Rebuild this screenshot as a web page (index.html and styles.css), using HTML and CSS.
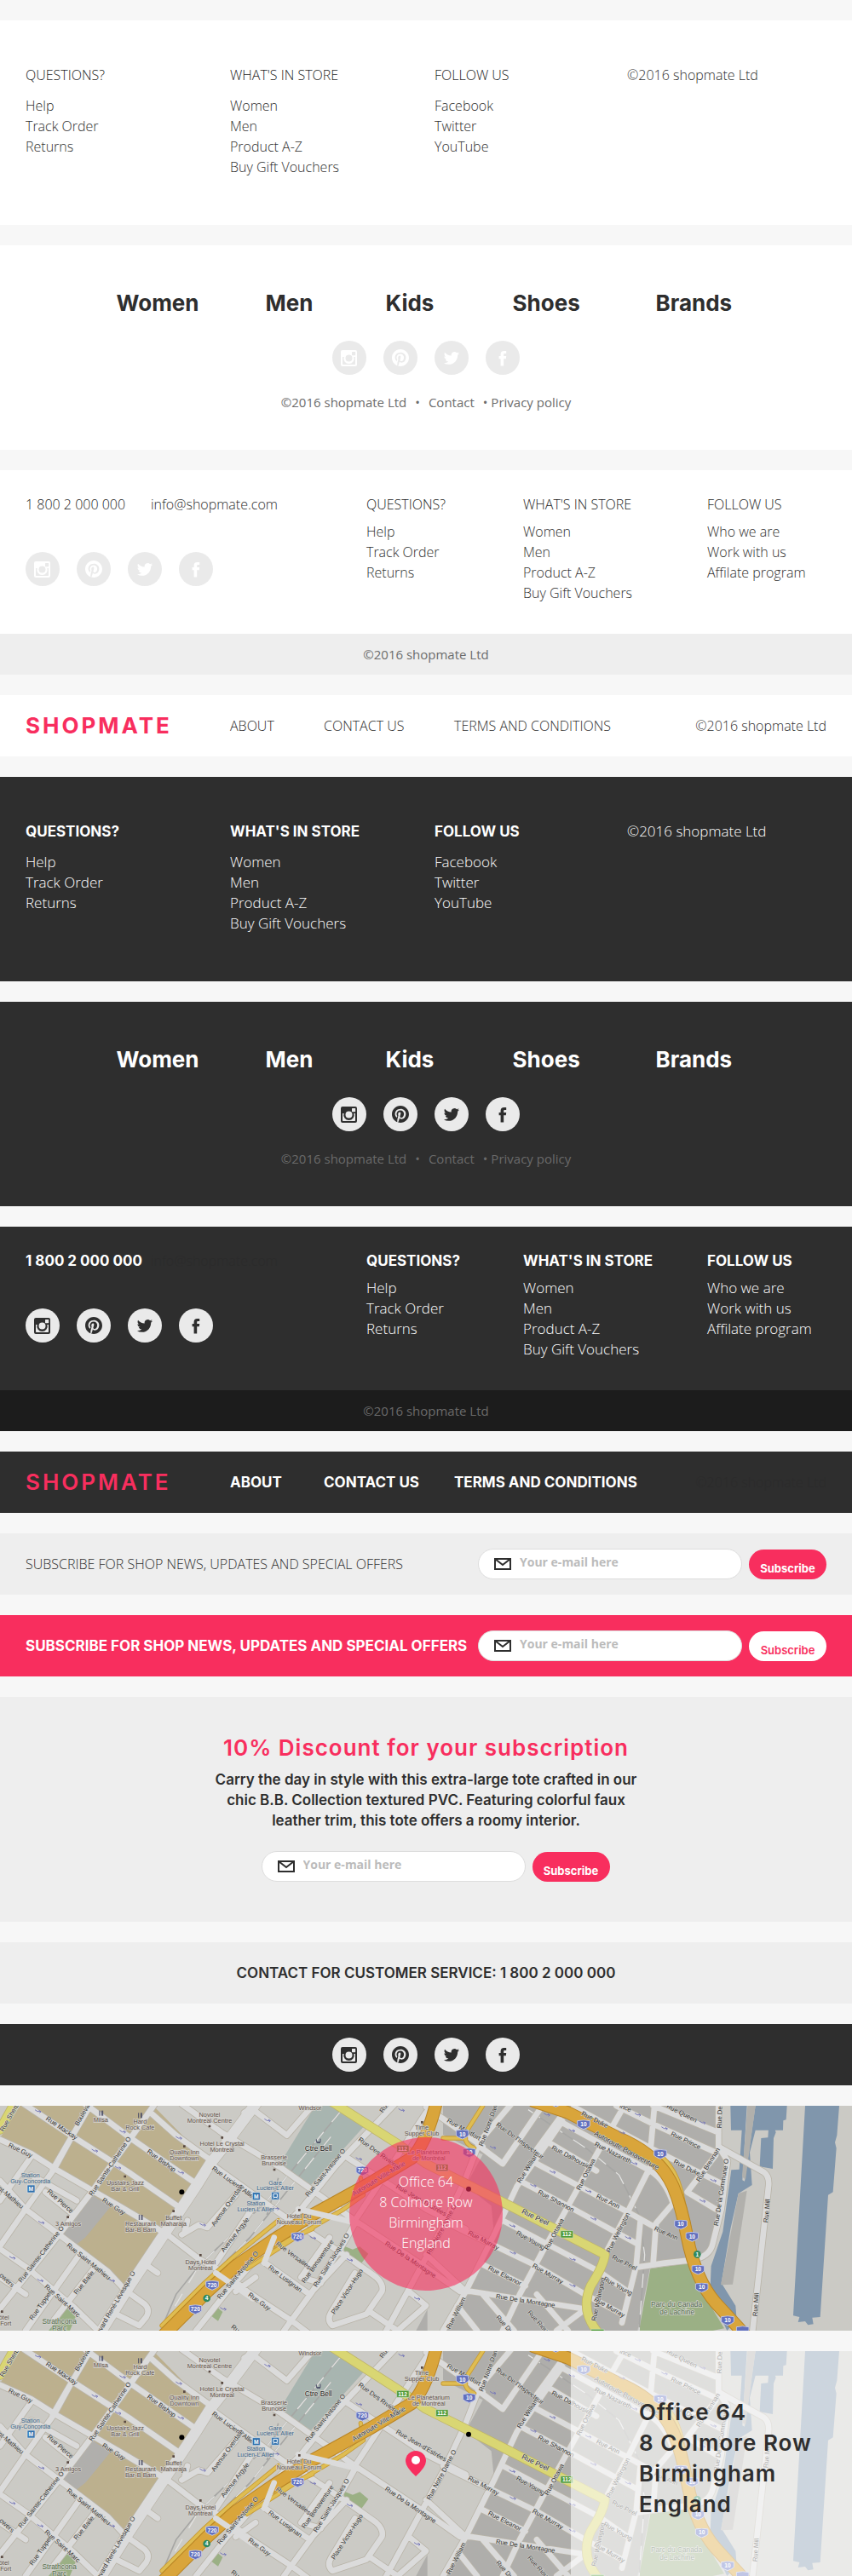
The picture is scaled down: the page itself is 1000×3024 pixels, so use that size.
FILE: index.html
```html
<!DOCTYPE html>
<html lang="en">
<head>
<meta charset="utf-8">
<meta name="viewport" content="width=device-width, initial-scale=1">
<title>Shopmate footers</title>
<link rel="stylesheet" href="styles.css">
</head>
<body>
<svg class="defs" aria-hidden="true">
  <symbol id="instagram" viewBox="0 0 40 40"><path fill-rule="evenodd" d="M12 11h15a2 2 0 0 1 2 2v15a2 2 0 0 1-2 2H12a2 2 0 0 1-2-2V13a2 2 0 0 1 2-2zM23.600 13a.6.6 0 0 0-.6.6v3a.6.6 0 0 0 .6.6h3a.6.6 0 0 0 .6-.6v-3a.6.6 0 0 0-.6-.6zM12 19v8.200a.8.8 0 0 0 .8.8h13.400a.8.8 0 0 0 .8-.8V19h-1.600a6.200 6.200 0 1 1-11.800 0zM19.500 16.500a4 4 0 1 0 0 8 4 4 0 0 0 0-8z"/></symbol>
  <symbol id="pinterest" viewBox="0 0 40 40"><path transform="translate(10 10) scale(.833)" d="M12 0C5.373 0 0 5.372 0 12c0 5.084 3.163 9.426 7.627 11.174-.105-.949-.2-2.405.042-3.441.218-.937 1.407-5.965 1.407-5.965s-.359-.719-.359-1.782c0-1.668.967-2.914 2.171-2.914 1.023 0 1.518.769 1.518 1.690 0 1.029-.655 2.568-.994 3.995-.283 1.194.599 2.169 1.777 2.169 2.133 0 3.772-2.249 3.772-5.495 0-2.873-2.064-4.882-5.012-4.882-3.414 0-5.418 2.561-5.418 5.207 0 1.031.397 2.138.893 2.738a.36.36 0 0 1 .083.345l-.333 1.360c-.053.22-.174.267-.402.161-1.499-.698-2.436-2.889-2.436-4.649 0-3.785 2.750-7.262 7.929-7.262 4.163 0 7.398 2.967 7.398 6.931 0 4.136-2.607 7.464-6.227 7.464-1.216 0-2.359-.631-2.750-1.378l-.748 2.853c-.271 1.043-1.002 2.350-1.492 3.146C9.570 23.812 10.763 24 12 24c6.627 0 12-5.373 12-12 0-6.628-5.373-12-12-12z"/></symbol>
  <symbol id="twitter" viewBox="0 0 40 40"><path transform="translate(10.800 11.300) scale(.76)" d="M23.954 4.569a10 10 0 0 1-2.825.775 4.958 4.958 0 0 0 2.163-2.723 9.990 9.990 0 0 1-3.127 1.184 4.920 4.920 0 0 0-8.384 4.482C7.691 8.094 4.066 6.130 1.640 3.161a4.822 4.822 0 0 0-.666 2.475c0 1.710.870 3.213 2.188 4.096a4.904 4.904 0 0 1-2.228-.616v.061a4.923 4.923 0 0 0 3.946 4.827 4.996 4.996 0 0 1-2.212.085 4.937 4.937 0 0 0 4.604 3.417 9.868 9.868 0 0 1-6.102 2.105c-.39 0-.779-.023-1.170-.067a13.995 13.995 0 0 0 7.557 2.209c9.054 0 13.999-7.496 13.999-13.986 0-.209 0-.42-.015-.63a9.936 9.936 0 0 0 2.460-2.548z"/></symbol>
  <symbol id="facebook" viewBox="0 0 40 40"><path d="M17.600 29.400v-8.200h-2v-3.100h2v-2.200c0-2.600 1.400-4 3.900-4h2.700v3.100h-1.700c-1 0-1.300.5-1.300 1.400v1.700h3l-.4 3.100h-2.600v8.200z"/></symbol>
  <symbol id="mail" viewBox="0 0 20 14"><path d="M1 1h18v12H1zM1 1l9 7 9-7" fill="none" stroke="#2e2e2e" stroke-width="2"/></symbol>

  <symbol id="shield" viewBox="0 0 48 36"><path d="M2 4q22-6 44 0v18q-6 6-22 12Q8 28 2 22z" fill="#6270bd" stroke="#c3c8e6" stroke-width="3"/></symbol>
  <symbol id="arrow" viewBox="0 0 28 20"><path d="M3 4l9 6h12M17 6l7 5-5 4" fill="none" stroke="#7a7bb8" stroke-width="3"/></symbol>

  <symbol id="map" viewBox="0 36 3000 792" preserveAspectRatio="xMidYMid slice">
    <rect y="30" width="3000" height="804" fill="#cbcac5"/>
    <path fill="#bcb08e" d="M70 36H540L740 240 570 480 440 672 215 500 330 330 180 255 0 150z"/>
    <path fill="#b0afac" d="M325 350 388 392Q350 440 300 500L265 527 215 492zM320 36 262 140 300 60z"/>
    <path fill="#a8b5b0" d="M1110 36h80l92 72-190 210-110-72z"/>
    <path fill="#afaeab" d="M1560 36H2530l3 150 30 50-25 170-38 155-210 40-45 227H1560l80-140 100-200-10-100-90-70 60-110-140-70zM1465 828l40-75v75z"/>
    <path fill="#9bb085" d="M2290 610l140-20 60 130 60 100-40 8h-260zM1212 530l30 12 25-10 30 25-25 35-60-32zM758 740l26 22-16 32-32-24zM238 748l28 32-20 48h-75z"/>
    <path fill="#8096ac" d="M2572 36H2630L2614 298 2622 302 2660 36H2771L2768 85 2758 88 2757 122H2660L2640 200 2648 315 2600 345 2572 470 2540 660 2590 740 2594 790 2560 828 2500 700 2504 600 2545 480 2575 262 2603 260 2612 122H2574zM2680 150 2704 148 2706 118H2728L2732 130 2724 150 2721 258 2675 250zM2835 36H2955L2947 140 2940 165 2945 185 2933 340 2916 350 2888 780 2860 782 2864 805 2845 808 2835 795 2810 798 2815 780 2793 775z"/>
    <path fill="#b1b0ac" d="M2632 36h28l-35 260-12-10zM2600 345l30-10-50 330-42 2z"/>
    <g fill="none" stroke="#a6a6a4" stroke-width="5">
      <path d="M1200 55 940 370 700 600 620 700 565 828M1165 145 1040 300 880 500 640 740M980 290 940 420M1860 50 2070 190 2180 280 2250 420 2270 560 2250 828"/>
      <path d="M1200 55 940 370 700 600 565 828M1165 145 880 500 640 740M1860 50 2070 190 2180 280 2250 420 2270 560 2250 828" stroke="#e2e2e0" stroke-width="4" stroke-dasharray="50 45"/>
    </g>
    <defs>
      <path id="streets" d="M85 30 250 140 460 275 640 400M0 155 110 205 200 262 430 395 590 490 700 575 800 630 870 690 1030 795 1090 840M300 30 460 150 690 310M530 60 620 140 745 230M640 30 780 130 990 255 1250 440 1500 605 1620 690 1660 690 2050 750M735 235 1000 425 1090 480 1240 580 1325 640Q1352 665 1345 690L1290 770 1170 810Q1150 790 1165 765L1250 625M885 45 1010 140 1100 36M0 300 90 400 215 495 380 620 440 685 510 735Q530 755 515 780L490 810 410 770M0 540 100 610 260 745 345 828M545 30 460 150 330 330 200 500 80 650 0 750M320 30 250 150 190 260 90 400 0 530M110 215 0 370M250 150 185 262M1390 30 1180 250 1060 400 940 520 880 600 800 690 690 828M1250 450 1210 520 1100 690 1000 828M1500 60 1250 440M1800 30 1690 160 1640 290 1560 460 1430 700 1360 828M1980 90 1820 320 1740 490 1640 690 1560 828M2110 190 2000 390 1910 550 1830 700 1770 828M2290 250 2210 410 2130 560M1900 50 1770 240 1690 180M2020 40 2300 190 2540 310M2170 36 2310 105 2520 200M2300 36 2530 130M1970 90 2280 260Q2340 290 2370 380L2310 450 2300 590M1940 170 2100 265M1890 240 2210 410 2300 460M1830 300 2020 400 2240 520M1770 440 2110 620 2210 690M1560 440 1620 470 1890 600 2060 700 2190 770M1690 590 1850 670M2530 180 2690 270Q2710 285 2706 320L2650 828M2530 36V180L2562 230 2540 400 2510 520Q2500 570 2430 580L2340 590 2240 605M2520 210 2420 340 2520 400M2305 30 2290 200M2190 50 2150 120M2255 440 2240 600 2190 800M1970 80 1890 190M1890 700 2000 828M1700 700 1810 828M1610 740 1680 828M2050 760 1960 828M920 580 1090 700 1220 560M1130 660 1060 640 1160 500M900 640 830 690M1300 760 1400 828M1640 690 1500 560M280 560 90 828M330 610 190 790M520 600 555 625M640 490 700 455 730 465 830 350M650 480 660 440M1210 210 1380 320 1500 400 1640 470M1500 40 1700 180M0 640 90 700M900 36 860 60M880 410 760 590M160 340 260 420 200 500M110 280 270 370M1440 690 1500 740 1400 828"/>
      <path id="avenue" d="M900 30 780 190 740 240 690 320 570 500 450 680 350 840"/>
      <path id="yellow" d="M1150 10 1400 170 1500 240 1760 370 2130 560Q2125 600 2080 670 2040 760 2110 840M50 30 0 120"/>
      <path id="autoroute" d="M570 850 730 690 830 600 960 510 1100 420 1300 310 1450 220Q1500 170 1535 30M1880 20 2000 60 2180 150Q2320 210 2370 320 2400 390 2420 500 2450 650 2520 730L2630 850"/>
      <path id="ramps" d="M570 810 720 660 820 570 980 440M870 610 1040 500 1210 400 1280 350 1270 290M920 550 1100 470M1640 150 1560 150M1700 36 1640 130Q1630 170 1670 185M2330 215Q2390 270 2405 370L2440 520"/>
    </defs>
    <g fill="none" stroke-linejoin="round" stroke-linecap="round">
      <use href="#streets" stroke="#b9b4a8" stroke-width="25"/>
      <use href="#avenue" stroke="#b9b4a8" stroke-width="42"/>
      <use href="#streets" stroke="#dbdbdb" stroke-width="20"/>
      <use href="#avenue" stroke="#dbdbdb" stroke-width="38"/>
      <use href="#yellow" stroke="#bfb56a" stroke-width="34"/>
      <use href="#yellow" stroke="#d9d673" stroke-width="29"/>
      <use href="#ramps" stroke="#c79a35" stroke-width="16"/>
      <use href="#ramps" stroke="#dfbd52" stroke-width="11"/>
      <use href="#autoroute" stroke="#b98525" stroke-width="46"/>
      <use href="#autoroute" stroke="#d9a53b" stroke-width="40"/>
      <path d="M760 625 890 715M930 590 965 500M1050 400 1260 450" stroke="#dbdbdb" stroke-width="20"/>
    </g>
    <g>
      <use href="#arrow" x="120" y="46" width="28" height="20"/><use href="#arrow" x="320" y="185" width="28" height="20"/><use href="#arrow" x="418" y="118" width="28" height="20"/><use href="#arrow" x="402" y="245" width="28" height="20"/><use href="#arrow" x="616" y="140" width="28" height="20"/><use href="#arrow" x="623" y="262" width="28" height="20"/><use href="#arrow" x="928" y="78" width="28" height="20"/><use href="#arrow" x="132" y="438" width="28" height="20"/><use href="#arrow" x="30" y="562" width="28" height="20"/><use href="#arrow" x="128" y="642" width="28" height="20"/><use href="#arrow" x="380" y="642" width="28" height="20"/><use href="#arrow" x="700" y="446" width="28" height="20"/><use href="#arrow" x="958" y="388" width="28" height="20"/><use href="#arrow" x="1088" y="492" width="28" height="20"/><use href="#arrow" x="1218" y="570" width="28" height="20"/><use href="#arrow" x="1250" y="214" width="28" height="20"/><use href="#arrow" x="1400" y="42" width="28" height="20"/><use href="#arrow" x="1455" y="706" width="28" height="20"/><use href="#arrow" x="772" y="742" width="28" height="20"/><use href="#arrow" x="1722" y="174" width="28" height="20"/><use href="#arrow" x="1912" y="58" width="28" height="20"/><use href="#arrow" x="2000" y="114" width="28" height="20"/><use href="#arrow" x="2176" y="122" width="28" height="20"/><use href="#arrow" x="2232" y="58" width="28" height="20"/><use href="#arrow" x="2326" y="106" width="28" height="20"/><use href="#arrow" x="2460" y="86" width="28" height="20"/><use href="#arrow" x="2220" y="230" width="28" height="20"/><use href="#arrow" x="1932" y="260" width="28" height="20"/><use href="#arrow" x="1864" y="308" width="28" height="20"/><use href="#arrow" x="2058" y="328" width="28" height="20"/><use href="#arrow" x="2076" y="425" width="28" height="20"/><use href="#arrow" x="2198" y="492" width="28" height="20"/><use href="#arrow" x="1790" y="450" width="28" height="20"/><use href="#arrow" x="1792" y="545" width="28" height="20"/><use href="#arrow" x="2002" y="568" width="28" height="20"/><use href="#arrow" x="2002" y="660" width="28" height="20"/><use href="#arrow" x="2460" y="362" width="28" height="20"/><use href="#arrow" x="2498" y="290" width="28" height="20"/>
    </g>
    <g class="map-street">
      <text transform="translate(160 85) rotate(34)">Rue Mackay</text>
      <text transform="translate(275 108) rotate(-60)">Boulevard</text>
      <text transform="translate(12 128) rotate(-60)">Rue Sherb</text>
      <text transform="translate(28 180) rotate(26)">Rue Guy</text>
      <text transform="translate(516 200) rotate(36)">Rue Bishop</text>
      <text transform="translate(325 355) rotate(-56)">Rue Sainte-Catherine O</text>
      <text transform="translate(165 340) rotate(42)">Rue Pierce</text>
      <text transform="translate(358 372) rotate(33)">Rue Guy</text>
      <text transform="translate(-8 330) rotate(40)">nt-Mathieu</text>
      <text transform="translate(233 530) rotate(39)">Rue Saint-Mathieu</text>
      <text transform="translate(75 660) rotate(-52)">Rue Sainte-Catherine O</text>
      <text transform="translate(155 675) rotate(42)">Rue Saint-Marc</text>
      <text transform="translate(270 702) rotate(-51)">Rue Baile</text>
      <text transform="translate(115 792) rotate(-55)">Rue Tupper</text>
      <text transform="translate(-4 635) rotate(42)">owers</text>
      <text transform="translate(352 840) rotate(-60)">evard René-Lévesque O</text>
      <text transform="translate(745 260) rotate(36)">Rue Lucien l'Allier</text>
      <text transform="translate(755 462) rotate(-54)">Avenue Overdale</text>
      <text transform="translate(788 553) rotate(-52)">Avenue Argyle</text>
      <text transform="translate(1085 358) rotate(-51)">Rue Saint-Antoine O</text>
      <text transform="translate(1260 158) rotate(36)">Rue Des Rivières</text>
      <text transform="translate(1246 354) rotate(-31)">Autoroute Ville-Marie</text>
      <text transform="translate(1393 325) rotate(30)">Rue Jean-d'Estrées</text>
      <text transform="translate(970 525) rotate(37)">Rue Versailles</text>
      <text transform="translate(943 608) rotate(37)">Rue Lusignan</text>
      <text transform="translate(1073 662) rotate(-55)">Rue Bonaventure</text>
      <text transform="translate(1115 676) rotate(-58)">Rue Saint-Jacques O</text>
      <text transform="translate(775 718) rotate(-50)">Rue Saint-Antoine O</text>
      <text transform="translate(872 705) rotate(36)">Rue Guy</text>
      <text transform="translate(1178 772) rotate(-57)">Place Victor-Hugo</text>
      <text transform="translate(1354 525) rotate(34)">Rue De la Montagne</text>
      <text transform="translate(812 818) rotate(36)">Rue Guy</text>
      <text transform="translate(1348 62) rotate(-55)">Rue</text>
      <text transform="translate(1572 92) rotate(30)">Rue Montfort</text>
      <text transform="translate(1700 180) rotate(-70)">Rue Notre Dame</text>
      <text transform="translate(1745 106) rotate(36)">Rue De l'Inspecteur</text>
      <text transform="translate(1940 188) rotate(28)">Rue Dalhousie</text>
      <text transform="translate(1832 310) rotate(-58)">Rue William</text>
      <text transform="translate(2042 335) rotate(-63)">Rue Ottawa</text>
      <text transform="translate(1892 345) rotate(28)">Rue Shannon</text>
      <text transform="translate(2098 360) rotate(26)">Rue Ann</text>
      <text class="large" transform="translate(1835 413) rotate(26)">Rue Peel</text>
      <text transform="translate(1816 488) rotate(30)">Rue Young</text>
      <text transform="translate(1930 545) rotate(-62)">Rue Ottawa</text>
      <text transform="translate(2148 555) rotate(-63)">Rue Wellington</text>
      <text transform="translate(1646 488) rotate(28)">Rue Murray</text>
      <text transform="translate(1515 562) rotate(-62)">Rue Notre Dame O</text>
      <text transform="translate(1717 612) rotate(27)">Rue Eleanor</text>
      <text transform="translate(1873 604) rotate(30)">Rue Murray</text>
      <text transform="translate(1745 714) rotate(9)">Rue De la Montagne</text>
      <text transform="translate(1585 824) rotate(-63)">Rue William</text>
      <text transform="translate(1745 782) rotate(48)">Rue Du</text>
      <text transform="translate(1856 765) rotate(48)">Rue Rioux</text>
      <text transform="translate(2098 795) rotate(-78)">Rue Wellington</text>
      <text transform="translate(2090 722) rotate(30)">Rue Murray</text>
      <text transform="translate(2123 650) rotate(29)">Rue Young</text>
      <text transform="translate(2153 574) rotate(27)">Rue Peel</text>
      <text class="large" transform="translate(2090 138) rotate(29)">Autoroute Bonaventure</text>
      <text transform="translate(2045 68) rotate(27)">Rue Duke</text>
      <text transform="translate(2092 176) rotate(27)">Rue Nazareth</text>
      <text transform="translate(2180 42) rotate(22)">ince</text>
      <text transform="translate(2345 42) rotate(27)">Rue Queen</text>
      <text transform="translate(2360 140) rotate(26)">Rue Prince</text>
      <text transform="translate(2370 238) rotate(27)">Rue Duke</text>
      <text transform="translate(2464 305) rotate(-58)">Rue Brennan</text>
      <text transform="translate(2528 460) rotate(-81)">Rue De la Commune O</text>
      <text transform="translate(2540 115) rotate(-88)">Rue De La</text>
      <text transform="translate(2302 474) rotate(24)">Rue Ann</text>
      <text transform="translate(2704 448) rotate(-85)">Rue Mill</text>
      <text transform="translate(2666 778) rotate(-86)">Rue Mill</text>
    </g>
    <g class="map-place">
      <text x="355" y="92">Milsa</text><text x="493" y="99">Hard</text><text x="493" y="120">Rock Café</text>
      <text x="738" y="75">Novotel</text><text x="738" y="96">Montreal Centre</text>
      <text x="782" y="177">Hotel Le Crystal</text><text x="782" y="198">Montreal</text>
      <text x="649" y="207">Quality Inn</text><text x="649" y="228">Downtown</text>
      <text x="441" y="315">Upstairs Jazz</text><text x="441" y="336">Bar &amp; Grill</text>
      <text x="495" y="458">Restaurant</text><text x="495" y="479">Bar-B Barn</text>
      <text x="611" y="437">Buffet</text><text x="611" y="458">Maharaja</text>
      <text x="240" y="458">3 Amigos</text>
      <text x="706" y="593">Days Hotel</text><text x="706" y="614">Montreal</text>
      <text x="965" y="226">Brasserie</text><text x="965" y="247">Brunoise</text>
      <text x="1053" y="431">Hotel Du</text><text x="1053" y="452">Nouveau Forum</text>
      <text x="1092" y="51">Windsor</text>
      <text x="1485" y="121">Time</text><text x="1485" y="142">Supper Club</text>
      <text x="1510" y="206">Le Planétarium</text><text x="1510" y="227">de Montréal</text>
      <text x="14" y="789">ôtel</text><text x="20" y="810">Fort</text>
    </g>
    <g class="map-place station">
      <text x="107" y="289">Station</text><text x="107" y="309">Guy-Concordia</text>
      <text x="969" y="315">Gare</text><text x="969" y="334">Lucien-L'Allier</text>
      <text x="901" y="387">Station</text><text x="901" y="407">Lucien-L'Allier</text>
    </g>
    <g class="map-place area">
      <text x="1121" y="194" fill="#222">Ctre Bell</text>
      <text x="209" y="803">Strathcona</text><text x="209" y="828">Parc</text>
      <text x="2382" y="745">Parc du Canada</text><text x="2384" y="771">de Lachine</text>
    </g>
    <g fill="#5a4a42"><path d="M734 104h8v8h-8zM778 144h8v8h-8zM645 175h8v8h-8zM436 281h8v8h-8zM607 403h8v8h-8zM235 424h8v8h-8zM702 558h8v8h-8zM962 257h8v8h-8zM1050 399h8v8h-8zM1482 90h8v8h-8zM3 757h8v8H3z"/></g>
    <path d="M351 53v18M359 53v18M362 53v18M488 61v18M496 61v18M499 61v18M490 420v18M498 420v18M501 420v18M1114 154v10h14v-12M1116 166h12" stroke="#4a4c66" stroke-width="3" fill="none"/>
    <circle cx="640" cy="340" r="9"/><circle cx="1650" cy="329" r="9"/>
    <g class="map-badge">
      <path fill="#2f70ad" stroke="#e1e8ef" stroke-width="2" d="M96 315h27v27H96zM889 341h27v27h-27zM956 340h27v27h-27z"/>
      <text x="109" y="337">M</text><text x="902" y="363">M</text>
      <path d="M963 346h13v12h-13zM963 362l2-4M976 362l-2-4" fill="none" stroke="#fff" stroke-width="3"/>
      <circle cx="728" cy="714" r="13" fill="#2f8a5e"/><text x="728" y="721">4</text>
      <circle cx="2455" cy="559" r="13" fill="#2f8a5e"/><text x="2455" y="566">1</text>
      <path fill="#4e9a36" stroke="#cfdcc8" stroke-width="2" d="M1397 175h43v24h-43zM1535 242h43v24h-43zM1974 476h44v25h-44zM2081 823h46v10h-46z"/>
      <text x="1418" y="194">112</text><text x="1556" y="261">112</text><text x="1996" y="495">112</text>
      <use href="#shield" x="1252" y="248" width="48" height="36"/><text x="1276" y="271">720</text>
      <use href="#shield" x="1024" y="481" width="48" height="36"/><text x="1048" y="504">720</text>
      <use href="#shield" x="723" y="651" width="48" height="36"/><text x="747" y="674">720</text>
      <use href="#shield" x="664" y="736" width="48" height="36"/><text x="688" y="759">720</text>
      <use href="#shield" x="1604" y="119" width="48" height="36"/><text x="1628" y="143">10</text>
      <use href="#shield" x="1628" y="184" width="48" height="36"/><text x="1652" y="208">10</text>
      <use href="#shield" x="2031" y="85" width="48" height="36"/><text x="2055" y="109">10</text>
      <use href="#shield" x="2301" y="189" width="48" height="36"/><text x="2325" y="213">10</text>
      <use href="#shield" x="2373" y="437" width="48" height="36"/><text x="2397" y="460">10</text>
      <use href="#shield" x="2413" y="480" width="48" height="36"/><text x="2437" y="503">10</text>
      <use href="#shield" x="2434" y="596" width="48" height="36"/><text x="2458" y="619">10</text>
      <use href="#shield" x="2447" y="659" width="48" height="36"/><text x="2471" y="682">10</text>
      <use href="#shield" x="2538" y="775" width="48" height="36"/><text x="2562" y="799">10</text>
      <use href="#shield" x="2591" y="811" width="48" height="36"/>
      <use href="#shield" x="1933" y="6" width="48" height="36"/>
    </g>
  </symbol>
</svg>

<main class="stack">
  <footer class="panel columns light">
    <div><h3>QUESTIONS?</h3><ul><li><a href="#">Help</a></li><li><a href="#">Track Order</a></li><li><a href="#">Returns</a></li></ul></div>
    <div><h3>WHAT'S IN STORE</h3><ul><li><a href="#">Women</a></li><li><a href="#">Men</a></li><li><a href="#">Product A-Z</a></li><li><a href="#">Buy Gift Vouchers</a></li></ul></div>
    <div><h3>FOLLOW US</h3><ul><li><a href="#">Facebook</a></li><li><a href="#">Twitter</a></li><li><a href="#">YouTube</a></li></ul></div>
    <p>©2016 shopmate Ltd</p>
  </footer>

  <footer class="panel centered light">
    <nav class="departments"><a href="#">Women</a><a href="#">Men</a><a href="#">Kids</a><a href="#">Shoes</a><a href="#">Brands</a></nav>
    <div class="social">
      <a href="#" aria-label="Instagram"><svg><use href="#instagram"/></svg></a><a href="#" aria-label="Pinterest"><svg><use href="#pinterest"/></svg></a><a href="#" aria-label="Twitter"><svg><use href="#twitter"/></svg></a><a href="#" aria-label="Facebook"><svg><use href="#facebook"/></svg></a>
    </div>
    <p class="legal"><span>©2016 shopmate Ltd</span><span>•</span><a href="#">Contact</a><span>• <a href="#">Privacy policy</a></span></p>
  </footer>

  <footer class="panel light">
    <div class="directory">
      <div>
        <div class="contact"><h3>1 800 2 000 000</h3><a href="#">info@shopmate.com</a></div>
        <div class="social">
          <a href="#" aria-label="Instagram"><svg><use href="#instagram"/></svg></a><a href="#" aria-label="Pinterest"><svg><use href="#pinterest"/></svg></a><a href="#" aria-label="Twitter"><svg><use href="#twitter"/></svg></a><a href="#" aria-label="Facebook"><svg><use href="#facebook"/></svg></a>
        </div>
      </div>
      <div><h3>QUESTIONS?</h3><ul><li><a href="#">Help</a></li><li><a href="#">Track Order</a></li><li><a href="#">Returns</a></li></ul></div>
      <div><h3>WHAT'S IN STORE</h3><ul><li><a href="#">Women</a></li><li><a href="#">Men</a></li><li><a href="#">Product A-Z</a></li><li><a href="#">Buy Gift Vouchers</a></li></ul></div>
      <div><h3>FOLLOW US</h3><ul><li><a href="#">Who we are</a></li><li><a href="#">Work with us</a></li><li><a href="#">Affilate program</a></li></ul></div>
    </div>
    <p class="legal base">©2016 shopmate Ltd</p>
  </footer>

  <footer class="panel strip light">
    <a class="logo" href="#">SHOPMATE</a><a href="#">ABOUT</a><a href="#">CONTACT US</a><a href="#">TERMS AND CONDITIONS</a><p>©2016 shopmate Ltd</p>
  </footer>

  <footer class="panel columns dark">
    <div><h3>QUESTIONS?</h3><ul><li><a href="#">Help</a></li><li><a href="#">Track Order</a></li><li><a href="#">Returns</a></li></ul></div>
    <div><h3>WHAT'S IN STORE</h3><ul><li><a href="#">Women</a></li><li><a href="#">Men</a></li><li><a href="#">Product A-Z</a></li><li><a href="#">Buy Gift Vouchers</a></li></ul></div>
    <div><h3>FOLLOW US</h3><ul><li><a href="#">Facebook</a></li><li><a href="#">Twitter</a></li><li><a href="#">YouTube</a></li></ul></div>
    <p>©2016 shopmate Ltd</p>
  </footer>

  <footer class="panel centered dark">
    <nav class="departments"><a href="#">Women</a><a href="#">Men</a><a href="#">Kids</a><a href="#">Shoes</a><a href="#">Brands</a></nav>
    <div class="social">
      <a href="#" aria-label="Instagram"><svg><use href="#instagram"/></svg></a><a href="#" aria-label="Pinterest"><svg><use href="#pinterest"/></svg></a><a href="#" aria-label="Twitter"><svg><use href="#twitter"/></svg></a><a href="#" aria-label="Facebook"><svg><use href="#facebook"/></svg></a>
    </div>
    <p class="legal"><span>©2016 shopmate Ltd</span><span>•</span><a href="#">Contact</a><span>• <a href="#">Privacy policy</a></span></p>
  </footer>

  <footer class="panel dark">
    <div class="directory">
      <div>
        <div class="contact"><h3>1 800 2 000 000</h3><a class="muted" href="#">info@shopmate.com</a></div>
        <div class="social">
          <a href="#" aria-label="Instagram"><svg><use href="#instagram"/></svg></a><a href="#" aria-label="Pinterest"><svg><use href="#pinterest"/></svg></a><a href="#" aria-label="Twitter"><svg><use href="#twitter"/></svg></a><a href="#" aria-label="Facebook"><svg><use href="#facebook"/></svg></a>
        </div>
      </div>
      <div><h3>QUESTIONS?</h3><ul><li><a href="#">Help</a></li><li><a href="#">Track Order</a></li><li><a href="#">Returns</a></li></ul></div>
      <div><h3>WHAT'S IN STORE</h3><ul><li><a href="#">Women</a></li><li><a href="#">Men</a></li><li><a href="#">Product A-Z</a></li><li><a href="#">Buy Gift Vouchers</a></li></ul></div>
      <div><h3>FOLLOW US</h3><ul><li><a href="#">Who we are</a></li><li><a href="#">Work with us</a></li><li><a href="#">Affilate program</a></li></ul></div>
    </div>
    <p class="legal base">©2016 shopmate Ltd</p>
  </footer>

  <footer class="panel strip dark">
    <a class="logo" href="#">SHOPMATE</a><a href="#">ABOUT</a><a href="#">CONTACT US</a><a href="#">TERMS AND CONDITIONS</a><p class="muted">©2016 shopmate Ltd</p>
  </footer>

  <section class="panel newsletter grey">
    <label for="email-a">SUBSCRIBE FOR SHOP NEWS, UPDATES AND SPECIAL OFFERS</label>
    <form class="signup"><span class="field"><svg><use href="#mail"/></svg><input id="email-a" type="email" placeholder="Your e-mail here"></span><button type="button">Subscribe</button></form>
  </section>

  <section class="panel newsletter pink">
    <label for="email-b">SUBSCRIBE FOR SHOP NEWS, UPDATES AND SPECIAL OFFERS</label>
    <form class="signup"><span class="field"><svg><use href="#mail"/></svg><input id="email-b" type="email" placeholder="Your e-mail here"></span><button type="button">Subscribe</button></form>
  </section>

  <section class="panel offer grey">
    <h2>10% Discount for your subscription</h2>
    <p>Carry the day in style with this extra-large tote crafted in our<br>chic B.B. Collection textured PVC. Featuring colorful faux<br>leather trim, this tote offers a roomy interior.</p>
    <form class="signup"><span class="field"><svg><use href="#mail"/></svg><input type="email" aria-label="E-mail" placeholder="Your e-mail here"></span><button type="button">Subscribe</button></form>
  </section>

  <section class="panel service grey"><p>CONTACT FOR CUSTOMER SERVICE: 1 800 2 000 000</p></section>

  <section class="panel social-bar dark">
    <div class="social">
      <a href="#" aria-label="Instagram"><svg><use href="#instagram"/></svg></a><a href="#" aria-label="Pinterest"><svg><use href="#pinterest"/></svg></a><a href="#" aria-label="Twitter"><svg><use href="#twitter"/></svg></a><a href="#" aria-label="Facebook"><svg><use href="#facebook"/></svg></a>
    </div>
  </section>

  <section class="location">
    <svg class="map" role="img" aria-label="Street map"><use href="#map"/></svg>
    <address class="bubble">Office 64<br>8 Colmore Row<br>Birmingham<br>England</address>
  </section>

  <section class="location">
    <svg class="map" role="img" aria-label="Street map"><use href="#map"/></svg>
    <svg class="pin" viewBox="0 0 24 30"><path d="M12 0a12 12 0 0 1 12 12q0 7-12 18Q0 19 0 12A12 12 0 0 1 12 0z" fill="#f82e5e"/><circle cx="12" cy="11" r="5" fill="#fff"/></svg>
    <address class="card">Office 64<br>8 Colmore Row<br>Birmingham<br>England</address>
  </section>
</main>
</body>
</html>
```
FILE: styles.css
```css
* { box-sizing: border-box; }

body {
  margin: 0;
  background: #f7f7f7;
  color: #2e2e2e;
  font: 300 16px/24px "Open Sans", "Noto Sans", sans-serif;
}

h2, h3, p, ul { margin: 0; padding: 0; }
ul { list-style: none; }
a { color: inherit; text-decoration: none; }
.defs { position: absolute; width: 0; height: 0; }

.stack {
  display: flex;
  flex-direction: column;
  gap: 24px;
  padding-top: 24px;
}

.light { background: #fff; }
.grey { background: #eee; }
.dark { background: #2e2e2e; color: #fff; font-size: 17px; }
.pink { background: #f82e5e; color: #fff; }
.dark .muted { color: #2b2b2b; font: 300 16px/24px "Open Sans", sans-serif; }

h3 { color: #1e1e1e; font-size: 16px; line-height: 24px; font-weight: 300; }
.dark h3 { color: #fff; font-family: Inter, sans-serif; font-weight: 700; font-size: 17px; }

/* link columns */
.columns {
  display: grid;
  grid-template-columns: 240fr 240fr 226fr 234fr;
  min-height: 240px;
  padding: 52px 30px;
}
.columns h3 { margin-bottom: 12px; }

/* centred departments */
.centered {
  display: flex;
  flex-direction: column;
  align-items: center;
  min-height: 240px;
  padding-top: 52px;
}
.departments {
  display: grid;
  grid-template-columns: 175px 141px 149px 168px 94px;
  font: 700 26px/32px Inter, sans-serif;
}
.centered .social { margin: 28px 0 20px; }

.legal { color: #6c6c6c; font-size: 15px; font-weight: 400; text-align: center; }
.dark .legal { color: #6a6a6a; }
.centered .legal { display: flex; gap: 10px; }
.base { padding: 12px; background: #eee; }
.dark .base { background: #1c1c1c; }

.social { display: flex; gap: 20px; }
.social a {
  display: block;
  width: 40px;
  height: 40px;
  border-radius: 50%;
  background: #eaeaea;
}
.social svg { display: block; width: 40px; height: 40px; fill: #fff; }
.dark .social svg { fill: #2e2e2e; }

/* contact directory */
.directory {
  display: grid;
  grid-template-columns: 400fr 184fr 216fr 140fr;
  min-height: 192px;
  padding: 28px 30px 0;
}
.directory h3 { margin-bottom: 8px; white-space: nowrap; }
.contact { display: grid; grid-template-columns: 147px auto; margin-bottom: 36px; }
.contact a { white-space: nowrap; }

/* single-line strip */
.strip {
  display: grid;
  grid-template-columns: 240px 110px 153px 1fr auto;
  align-items: center;
  min-height: 72px;
  padding: 0 30px;
}
.logo { color: #f82e5e; font: 700 26px/32px Inter, sans-serif; letter-spacing: 3px; }
.strip.dark { font: 700 17px/24px Inter, sans-serif; }
.dark .logo { font-weight: 600; }

/* newsletter */
.newsletter {
  display: flex;
  align-items: center;
  justify-content: space-between;
  min-height: 72px;
  padding: 0 30px;
}
.newsletter label { white-space: nowrap; }
.pink label { font: 700 17px/24px Inter, sans-serif; }
.signup { display: flex; align-items: center; gap: 8px; }
.field {
  display: flex;
  align-items: center;
  gap: 10px;
  width: 310px;
  height: 36px;
  padding: 0 18px;
  border: 1px solid #ddd;
  border-radius: 18px;
  background: #fff;
}
.field svg { flex: none; width: 20px; height: 14px; }
.field input {
  flex: 1;
  min-width: 0;
  height: 34px;
  padding: 0 0 5px;
  border: 0;
  outline: 0;
  background: none;
  color: #2e2e2e;
  font: 700 14px/24px "Open Sans", sans-serif;
}
.field input::placeholder { color: #bbb; opacity: 1; }
.signup button {
  width: 91px;
  height: 35px;
  padding: 9px 0 0;
  border: 0;
  border-radius: 18px;
  background: #f82e5e;
  color: #fff;
  font: 700 13px/16px Inter, sans-serif;
}
.pink .signup button { background: #fff; color: #f82e5e; font-weight: 600; }

/* discount offer */
.offer {
  display: flex;
  flex-direction: column;
  align-items: center;
  min-height: 264px;
  padding-top: 42px;
  text-align: center;
}
.offer h2 {
  margin-bottom: 7px;
  color: #f82e5e;
  font: 600 26px/36px Inter, sans-serif;
  letter-spacing: 1px;
}
.offer p { font: 600 17px/24px Inter, sans-serif; }
.offer .signup { margin: 24px 0 0 22px; }

.service {
  display: grid;
  place-items: center;
  min-height: 72px;
  font: 600 17px/24px Inter, sans-serif;
}
.social-bar { display: flex; justify-content: center; padding: 16px; }

/* maps */
.location { position: relative; height: 264px; }
.map { display: block; width: 100%; height: 100%; }
.map-street { fill: #33322f; stroke: #d8d8d6; stroke-width: 3px; paint-order: stroke; font: 400 23px "Liberation Sans", Arial, sans-serif; }
.map-street .large { font-size: 25px; }
.map-place { fill: #5f5048; stroke: #d6d5d1; stroke-width: 4px; paint-order: stroke; text-anchor: middle; font: 400 22px "Liberation Sans", Arial, sans-serif; }
.station { fill: #355f88; font-size: 21px; }
.area { fill: #4e6a48; font-size: 25px; }
.map-badge text { fill: #fff; text-anchor: middle; font: 700 20px "Liberation Sans", Arial, sans-serif; }
.bubble {
  position: absolute;
  top: 37px;
  left: 50%;
  width: 180px;
  height: 180px;
  margin-left: -90px;
  padding-top: 40px;
  border-radius: 50%;
  background: rgba(248, 46, 94, .6);
  color: #fff;
  font-style: normal;
  text-align: center;
}
.pin { position: absolute; top: 117px; left: 50%; width: 24px; height: 30px; margin-left: -24px; }
.card {
  position: absolute;
  inset: 0 0 0 67%;
  padding: 54px 0 0 80px;
  background: rgba(255, 255, 255, .6);
  font: 600 26px/36px Inter, sans-serif;
  letter-spacing: 1px;
}
```
